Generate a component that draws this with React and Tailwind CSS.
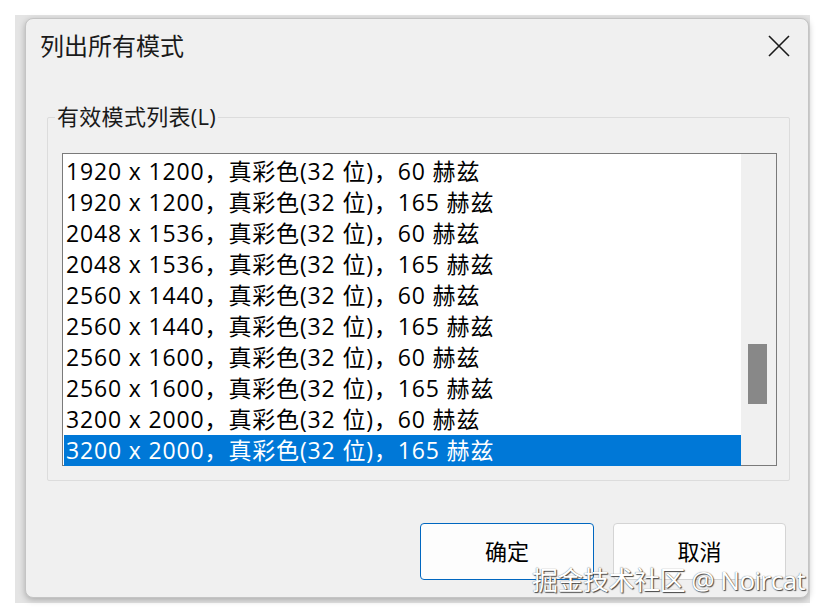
import React from 'react';

const rows = [
  '1920 x 1200，真彩色(32 位)，60 赫兹',
  '1920 x 1200，真彩色(32 位)，165 赫兹',
  '2048 x 1536，真彩色(32 位)，60 赫兹',
  '2048 x 1536，真彩色(32 位)，165 赫兹',
  '2560 x 1440，真彩色(32 位)，60 赫兹',
  '2560 x 1440，真彩色(32 位)，165 赫兹',
  '2560 x 1600，真彩色(32 位)，60 赫兹',
  '2560 x 1600，真彩色(32 位)，165 赫兹',
  '3200 x 2000，真彩色(32 位)，60 赫兹',
  '3200 x 2000，真彩色(32 位)，165 赫兹',
];

const font = { fontFamily: '"Open Sans", "Noto Sans CJK SC", sans-serif' };

export default function App() {
  return (
    <div className="relative w-[822px] h-[616px] bg-white overflow-hidden" style={font}>
      <div className="pt-[15px] pl-[15px]">
        {/* backdrop window */}
        <div className="w-[795px] h-[588px] bg-[#e4e4e4] pt-[3px] pl-[10px]">
          {/* dialog */}
          <div className="w-[784px] h-[580px] bg-[#f0f0f0] rounded-[8px] border border-[#c4c4c4] shadow-[0_2px_6px_rgba(0,0,0,0.25)] flex flex-col">
            {/* title bar */}
            <div className="flex items-center justify-between h-[54px] pl-[14px] pr-[16px]">
              <span className="text-[24px] text-[#1a1a1a]">列出所有模式</span>
              <svg width="22" height="22" viewBox="0 0 22 22" className="mr-[2px]">
                <path d="M1 1 L21 21 M21 1 L1 21" stroke="#1a1a1a" strokeWidth="1.6" fill="none" />
              </svg>
            </div>

            {/* group box */}
            <div className="relative mt-[44px] ml-[21px] mr-[18px] h-[364px] border border-[#dcdcdc] rounded-[2px] pt-[35px] pl-[14px] pr-[12px]">
              <span className="absolute left-[7px] top-[-17px] bg-[#f0f0f0] px-[2px] text-[22px] leading-[30px] text-[#1a1a1a] tracking-[0.3px]">有效模式列表(L)</span>

              <div className="h-[313px] border border-[#7a7a7a] bg-white flex">
                <div className="flex-1 pt-[2px] pl-[1px]">
                  {rows.map((r, i) => (
                    <div
                      key={i}
                      className={`h-[31px] pl-[2px] text-[23px] leading-[31px] tracking-[0.85px] whitespace-nowrap ${
                        i === rows.length - 1 ? 'bg-[#0078d7] text-white' : 'text-black'
                      }`}
                    >
                      {r}
                    </div>
                  ))}
                </div>
                {/* scrollbar */}
                <div className="w-[35px] bg-[#f0f0f0] flex flex-col pt-[190px] pl-[7px]">
                  <div className="w-[19px] h-[60px] bg-[#888888]" />
                </div>
              </div>
            </div>

            {/* buttons */}
            <div className="flex justify-end gap-[19px] mt-[42px] pr-[22px]">
              <button className="w-[174px] h-[57px] rounded-[4px] border border-[#0067c0] bg-[#fdfdfd] text-[22px] text-black">
                确定
              </button>
              <button className="w-[173px] h-[57px] rounded-[4px] border border-[#d4d4d4] bg-[#fdfdfd] text-[22px] text-black">
                取消
              </button>
            </div>
          </div>
        </div>
      </div>

      {/* watermark */}
      <div className="absolute left-[532px] top-[562px] text-[26px] leading-[36px] text-white tracking-[-0.5px] [text-shadow:0_0_1px_#555,1px_1px_1px_#444]">
        掘金技术社区 @ Noircat
      </div>
    </div>
  );
}
